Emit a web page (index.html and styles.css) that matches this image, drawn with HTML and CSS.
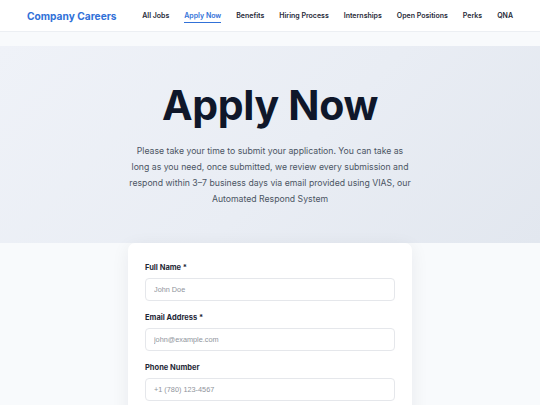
FILE: index.html
```html
<!DOCTYPE html>
<html lang="en">
    <head>
        <meta charset="UTF-8">
        <meta name="viewport" content="width=device-width, initial-scale=1.0">
        <title>Apply Now - Company Careers</title>
        <link rel="stylesheet" href="styles.css">
    </head>
    <body>
        <header class="topbar">
            <a class="brand" href="#">Company Careers</a>
            <nav class="nav">
                <a href="#">All Jobs</a>
                <a href="#" class="active">Apply Now</a>
                <a href="#">Benefits</a>
                <a href="#">Hiring Process</a>
                <a href="#">Internships</a>
                <a href="#">Open Positions</a>
                <a href="#">Perks</a>
                <a href="#">QNA</a>
            </nav>
        </header>

        <main class="page">
            <section class="hero">
                <h1 class="hero_title">Apply Now</h1>
                <p class="hero_text">
                    Please take your time to submit your application. You can take as long as you need, once submitted, we review every submission and respond within 3–7 business days via email provided using VIAS, our Automated Respond System
                </p>
            </section>

            <section class="form_wrap">
                <form class="card">
                    <div class="field">
                        <label for="name">Full Name *</label>
                        <input id="name" type="text" placeholder="John Doe">
                    </div>
                    <div class="field">
                        <label for="email">Email Address *</label>
                        <input id="email" type="email" placeholder="john@example.com">
                    </div>
                    <div class="field">
                        <label for="phone">Phone Number</label>
                        <input id="phone" type="tel" placeholder="+1 (780) 123-4567">
                    </div>
                </form>
            </section>
        </main>
    </body>
</html>
```

FILE: styles.css
```css
:root {
    --blue: #3171d8;
    --ink: #0f172a;
    --text: #374151;
    --muted: #4b5563;
    --line: #e5e7eb;
    --page-bg: #f8fafc;
}

* {
    box-sizing: border-box;
}

body {
    margin: 0;
    background: var(--page-bg);
    font-family: Inter, "Noto Sans", sans-serif;
    color: var(--text);
    overflow: hidden;
}

a {
    text-decoration: none;
    white-space: nowrap;
}

.topbar {
    height: 32px;
    background: #fff;
    border-bottom: 1px solid #eceff3;
    display: flex;
    align-items: center;
    justify-content: space-between;
    padding: 0 27px;
}

.brand {
    color: var(--blue);
    font-size: 10.2px;
    font-weight: 700;
}

.nav {
    display: flex;
    gap: 15px;
}

.nav a {
    color: #1f2937;
    font-size: 7px;
    font-weight: 600;
    padding: 2px 0;
    border-bottom: 1px solid transparent;
}

.nav a.active {
    color: var(--blue);
    border-bottom-color: var(--blue);
}

.page {
    padding-top: 14px;
}

.hero {
    height: 197px;
    background: linear-gradient(135deg, #eff2f8 0%, #e9edf4 55%, #e2e7ef 100%);
    text-align: center;
    padding-top: 34px;
}

.hero_title {
    margin: 0;
    color: var(--ink);
    font-size: 41px;
    font-weight: 700;
    line-height: 50px;
    letter-spacing: -0.3px;
}

.hero_text {
    margin: 13px auto 0;
    max-width: 284px;
    color: var(--muted);
    font-size: 8.7px;
    line-height: 16px;
}

.form_wrap {
    display: flex;
    justify-content: center;
}

.card {
    width: 284px;
    background: #fff;
    border-radius: 7px;
    box-shadow: 0 4px 18px rgba(15, 23, 42, 0.07);
    padding: 20px 17px;
}

.field {
    display: flex;
    flex-direction: column;
    gap: 5px;
    margin-bottom: 12px;
}

.field label {
    color: #1f2937;
    font-size: 7.5px;
    font-weight: 700;
    line-height: 10px;
}

.field input {
    height: 23px;
    border: 1px solid var(--line);
    border-radius: 4px;
    padding: 0 8px;
    font-family: "Liberation Sans", Arial, sans-serif;
    font-size: 7.3px;
    color: var(--ink);
    background: #fff;
}

.field input::placeholder {
    color: #8f949c;
}
```
